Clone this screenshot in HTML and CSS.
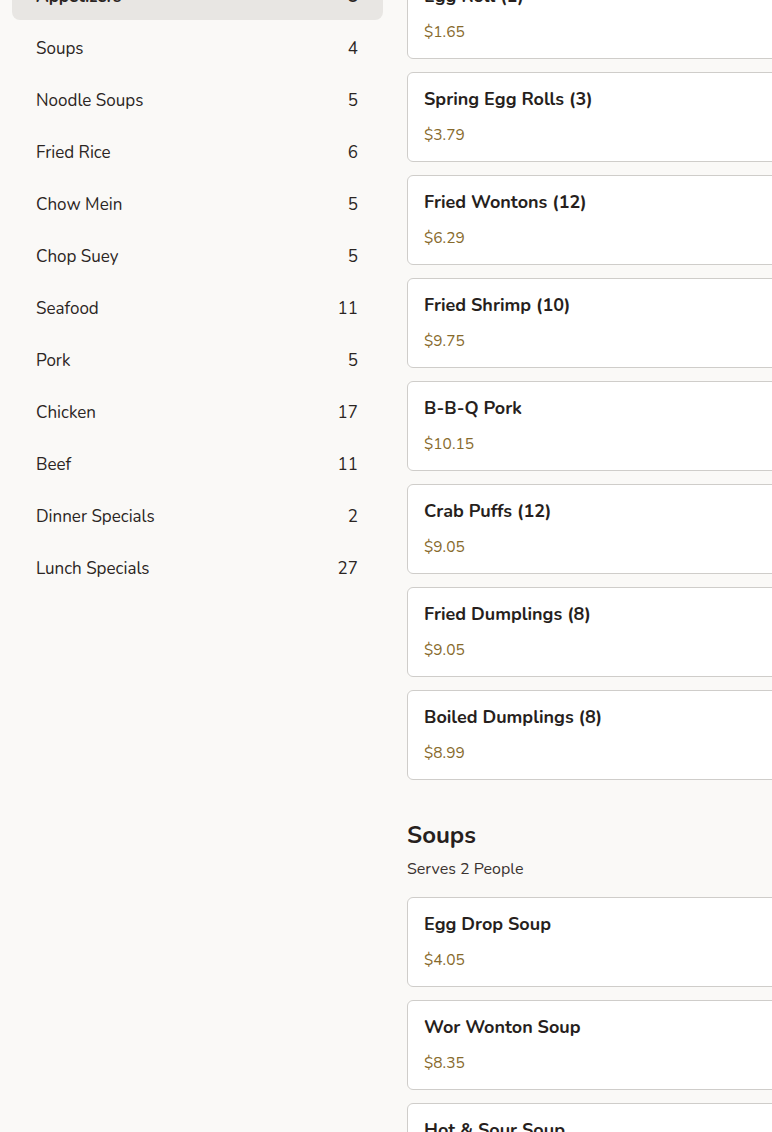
FILE: index.html
```html
<!DOCTYPE html>
<html>
<head>
<meta charset="utf-8">
<link rel="stylesheet" href="styles.css">
</head>
<body>
<div class="page">
  <nav class="sidebar">
    <div class="cat active"><span>Appetizers</span><span>8</span></div>
    <div class="cat"><span>Soups</span><span>4</span></div>
    <div class="cat"><span>Noodle Soups</span><span>5</span></div>
    <div class="cat"><span>Fried Rice</span><span>6</span></div>
    <div class="cat"><span>Chow Mein</span><span>5</span></div>
    <div class="cat"><span>Chop Suey</span><span>5</span></div>
    <div class="cat"><span>Seafood</span><span>11</span></div>
    <div class="cat"><span>Pork</span><span>5</span></div>
    <div class="cat"><span>Chicken</span><span>17</span></div>
    <div class="cat"><span>Beef</span><span>11</span></div>
    <div class="cat"><span>Dinner Specials</span><span>2</span></div>
    <div class="cat"><span>Lunch Specials</span><span>27</span></div>
  </nav>
  <main class="menu">
    <section class="section first">
      <div class="card"><div class="name">Egg Roll (1)</div><div class="price">$1.65</div></div>
      <div class="card"><div class="name">Spring Egg Rolls (3)</div><div class="price">$3.79</div></div>
      <div class="card"><div class="name">Fried Wontons (12)</div><div class="price">$6.29</div></div>
      <div class="card"><div class="name">Fried Shrimp (10)</div><div class="price">$9.75</div></div>
      <div class="card"><div class="name">B-B-Q Pork</div><div class="price">$10.15</div></div>
      <div class="card"><div class="name">Crab Puffs (12)</div><div class="price">$9.05</div></div>
      <div class="card"><div class="name">Fried Dumplings (8)</div><div class="price">$9.05</div></div>
      <div class="card"><div class="name">Boiled Dumplings (8)</div><div class="price">$8.99</div></div>
    </section>
    <section class="section">
      <h2 class="sec-title">Soups</h2>
      <p class="sec-sub">Serves 2 People</p>
      <div class="card"><div class="name">Egg Drop Soup</div><div class="price">$4.05</div></div>
      <div class="card"><div class="name">Wor Wonton Soup</div><div class="price">$8.35</div></div>
      <div class="card"><div class="name">Hot &amp; Sour Soup</div><div class="price">$8.35</div></div>
    </section>
  </main>
</div>
</body>
</html>
```
FILE: styles.css
```css
html, body {
  margin: 0;
  padding: 0;
  background: #faf9f7;
  overflow: hidden;
}
body {
  font-family: "Nunito", "Lato", "Noto Sans", sans-serif;
  color: #2b2523;
}
.page {
  display: flex;
  gap: 24px;
  padding-left: 12px;
  width: 1000px;
  height: 1132px;
  overflow: hidden;
}
.sidebar {
  width: 371px;
  flex: none;
  margin-top: -32px;
  display: flex;
  flex-direction: column;
}
.cat {
  box-sizing: border-box;
  height: 52px;
  display: flex;
  align-items: center;
  justify-content: space-between;
  padding: 4px 25px 0 24px;
  font-size: 17px;
  color: #2b2523;
  border-radius: 8px;
}
.cat.active {
  background: #e8e6e3;
  font-weight: 700;
}
.menu {
  flex: none;
  width: 560px;
  margin-top: -31px;
}
.section {
  display: flex;
  flex-direction: column;
  gap: 13px;
}
.card {
  background: #ffffff;
  border: 1px solid #cfcdca;
  border-radius: 6px;
  padding: 14px 16px 14px;
  display: flex;
  flex-direction: column;
  gap: 12px;
}
.name {
  font-size: 18px;
  line-height: 24px;
  font-weight: 700;
  color: #271f1d;
}
.price {
  font-size: 15.5px;
  line-height: 24px;
  color: #876a2c;
}
.sec-title {
  margin: 40px 0 0;
  font-size: 24px;
  line-height: 30px;
  font-weight: 700;
  color: #271f1d;
}
.sec-sub {
  margin: -5px 0 4px;
  font-size: 16px;
  line-height: 22px;
  color: #3a3330;
}
```
